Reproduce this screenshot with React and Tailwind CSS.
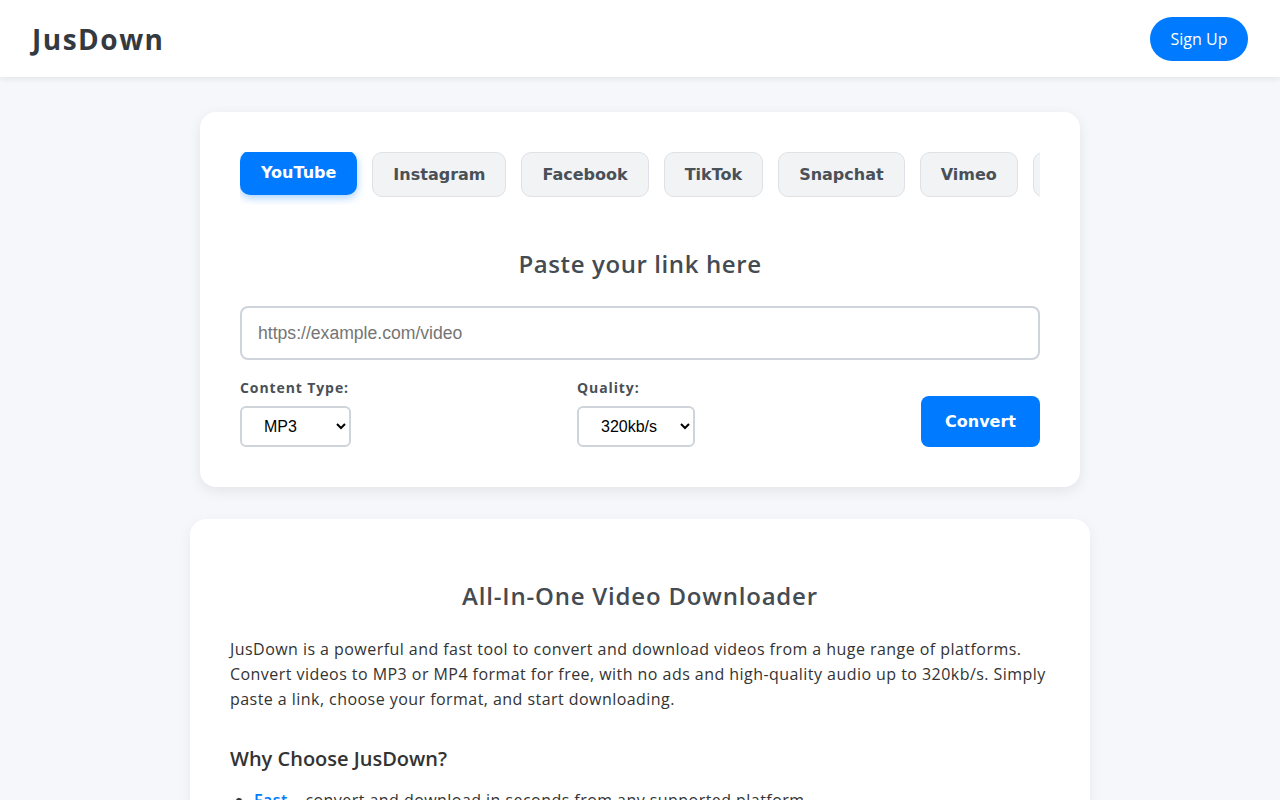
import React from "react";

const tabs = ["YouTube", "Instagram", "Facebook", "TikTok", "Snapchat", "Vimeo", "Twitter", "Dailymotion", "Reddit"];

export default function App() {
  return (
    <div className="min-h-screen bg-[#f5f7fa] font-['Open_Sans',sans-serif] text-[#333]">
      <header className="h-[77px] bg-white shadow-[0_2px_6px_rgba(0,0,0,0.08)] flex items-center justify-between pl-8 pr-8 relative z-10">
        <div className="text-[28px] font-bold text-[#343a40] tracking-[1.5px]">JusDown</div>
        <button className="h-[44px] w-[98px] rounded-full bg-[#007bff] text-white text-[16px]">Sign Up</button>
      </header>

      <main className="pt-[35px] flex flex-col items-center pb-10">
        <section className="w-[880px] bg-white rounded-2xl shadow-[0_4px_14px_rgba(0,0,0,0.08)] px-10 pt-10 pb-10">
          <div className="flex gap-[15px] overflow-x-auto pb-[8px] [scrollbar-width:none] font-['DejaVu_Sans',sans-serif]">
            {tabs.map((t, i) =>
              i === 0 ? (
                <button
                  key={t}
                  className="shrink-0 -translate-y-[1px] h-[44px] px-[21px] rounded-[10px] bg-[#007bff] text-white font-bold text-[16px] shadow-[0_3px_8px_rgba(0,123,255,0.35)]"
                >
                  {t}
                </button>
              ) : (
                <button
                  key={t}
                  className="shrink-0 h-[45px] px-[20px] rounded-[10px] bg-[#f1f3f5] border border-[#dee2e6] text-[#495057] font-bold text-[16px]"
                >
                  {t}
                </button>
              )
            )}
          </div>

          <h2 className="mt-[41px] text-center text-[24px] font-semibold text-[#454b52] leading-[36px] tracking-[0.6px]">Paste your link here</h2>

          <input
            type="text"
            placeholder="https://example.com/video"
            className="mt-[24px] block w-full h-[54px] border-2 border-[#ced4da] rounded-lg px-[16px] text-[17.6px] font-['Liberation_Sans',Arial,sans-serif] placeholder:text-[#757575] outline-none"
          />

          <div className="mt-[17px] flex items-end justify-between">
            <div className="flex flex-col">
              <label className="text-[14px] font-bold text-[#495057] leading-[21px] tracking-[0.9px]">Content Type:</label>
              <select className="mt-[8px] h-[41px] w-[111px] border-2 border-[#ced4da] rounded-md pl-[18px] pr-1 bg-white text-[16px] text-black font-['Liberation_Sans',Arial,sans-serif]">
                <option>MP3</option>
                <option>MP4</option>
              </select>
            </div>
            <div className="flex flex-col">
              <label className="text-[14px] font-bold text-[#495057] leading-[21px] tracking-[0.9px]">Quality:</label>
              <select className="mt-[8px] h-[41px] w-[118px] border-2 border-[#ced4da] rounded-md pl-[18px] pr-1 bg-white text-[16px] text-black font-['Liberation_Sans',Arial,sans-serif]">
                <option>320kb/s</option>
                <option>256kb/s</option>
                <option>128kb/s</option>
              </select>
            </div>
            <button className="h-[51px] w-[119px] rounded-lg bg-[#007bff] text-white font-bold text-[16px] font-['DejaVu_Sans',sans-serif]">
              Convert
            </button>
          </div>
        </section>

        <section className="mt-[32px] w-[900px] bg-white rounded-2xl shadow-[0_4px_14px_rgba(0,0,0,0.06)] px-10 pt-10 pb-10">
          <h2 className="mt-[19px] text-center text-[24px] font-semibold text-[#454b52] leading-[36px] tracking-[0.8px]">All-In-One Video Downloader</h2>
          <p className="mt-[23px] text-[16px] leading-[25px] text-[#333] tracking-[0.45px]">
            JusDown is a powerful and fast tool to convert and download videos from a huge range of platforms.
            <br />
            Convert videos to MP3 or MP4 format for free, with no ads and high-quality audio up to 320kb/s. Simply
            <br />
            paste a link, choose your format, and start downloading.
          </p>
          <h3 className="mt-[32px] text-[20px] font-semibold text-[#333] leading-[30px]">Why Choose JusDown?</h3>
          <ul className="mt-[14px] pl-6 text-[16px] leading-[25px] text-[#333] list-disc tracking-[0.45px]">
            <li><span className="text-[#007bff] font-semibold">Fast</span> – convert and download in seconds from any supported platform.</li>
            <li><span className="text-[#007bff] font-semibold">Free</span> – no hidden fees, no sign-up required.</li>
            <li><span className="text-[#007bff] font-semibold">No Ads</span> – a clean, distraction-free experience.</li>
          </ul>
        </section>
      </main>
    </div>
  );
}
